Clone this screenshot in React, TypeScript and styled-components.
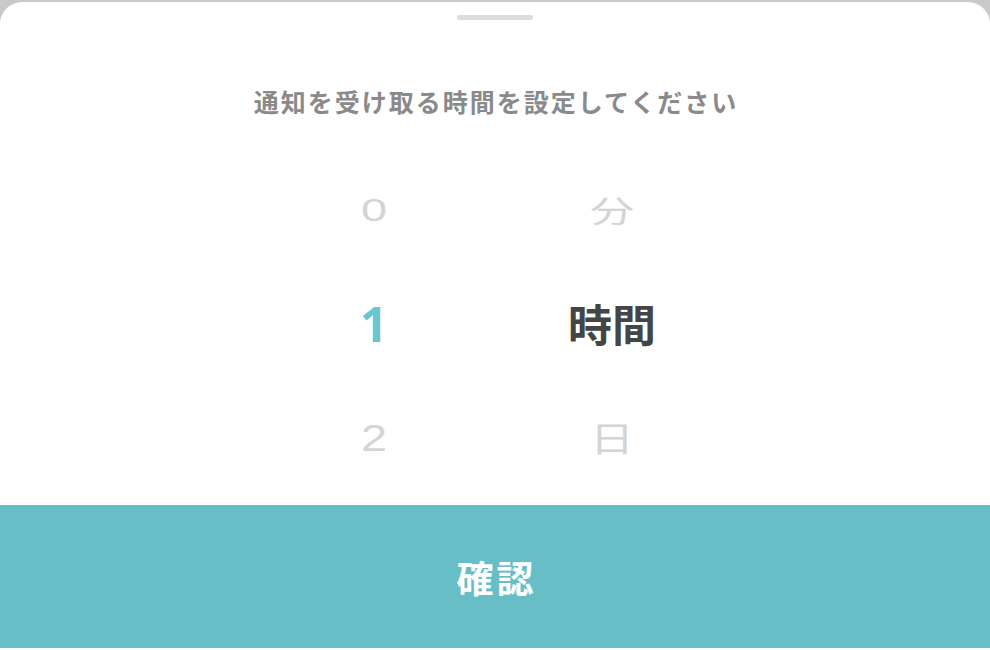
import React from "react";
import styled, { createGlobalStyle } from "styled-components";

const Global = createGlobalStyle`
  html, body { margin: 0; padding: 0; background: #c9c9c9; }
  body { width: 990px; height: 650px; overflow: hidden; }
`;

const Sheet = styled.div`
  margin-top: 2px;
  height: 648px;
  box-sizing: border-box;
  background: #ffffff;
  border-radius: 22px 22px 0 0;
  display: flex;
  flex-direction: column;
  align-items: center;
  padding-bottom: 2px;
`;

const Handle = styled.div`
  margin-top: 13px;
  width: 76px;
  height: 5px;
  border-radius: 3px;
  background: #dcdcdc;
`;

const Title = styled.h1`
  margin: 61px 0 0;
  font-family: "Noto Sans CJK JP", "Noto Sans", sans-serif;
  font-size: 25px;
  line-height: 40px;
  font-weight: 700;
  color: #8a8a8a;
  letter-spacing: 2px;
  text-indent: 2px;
`;

const Picker = styled.div`
  flex: 1;
  align-self: stretch;
  display: grid;
  grid-template-columns: 238px 238px;
  justify-content: center;
  padding-top: 31px;
  padding-right: 4px;
`;

const Column = styled.div`
  display: flex;
  flex-direction: column;
  align-items: center;
`;

const Item = styled.div<{ $state: "top" | "selected" | "bottom"; $kind: "num" | "unit" }>`
  height: 114px;
  display: flex;
  align-items: center;
  justify-content: center;
  font-family: ${(p) =>
    p.$kind === "num"
      ? p.$state === "selected"
        ? `"Open Sans", "Noto Sans", sans-serif`
        : `"Liberation Sans", Arial, sans-serif`
      : `"Noto Sans CJK JP", "Noto Sans", sans-serif`};
  font-size: ${(p) =>
    p.$state === "selected" ? (p.$kind === "num" ? "49px" : "44px") : p.$kind === "num" ? "47px" : "44px"};
  font-weight: ${(p) => (p.$state === "selected" ? 700 : 400)};
  color: ${(p) =>
    p.$state === "selected" ? (p.$kind === "num" ? "#6cc6cf" : "#454545") : "#d4d4d4"};
  transform: ${(p) =>
    p.$state === "top" ? "scaleY(0.68)" : p.$state === "bottom" ? "scaleY(0.8)" : "none"};
`;

const ConfirmButton = styled.button`
  align-self: stretch;
  height: 143px;
  flex-shrink: 0;
  border: none;
  background: #68bec6;
  color: #ffffff;
  font-family: "Noto Sans CJK JP", "Noto Sans", sans-serif;
  font-size: 37px;
  font-weight: 700;
  letter-spacing: 3px;
  text-indent: 3px;
  cursor: pointer;
  padding: 0;
`;

const nums = ["0", "1", "2"];
const units = ["分", "時間", "日"];
const states = ["top", "selected", "bottom"] as const;

export default function App() {
  return (
    <>
      <Global />
      <Sheet>
        <Handle />
        <Title>通知を受け取る時間を設定してください</Title>
        <Picker>
          <Column>
            {nums.map((n, i) => (
              <Item key={n} $state={states[i]} $kind="num">
                {n}
              </Item>
            ))}
          </Column>
          <Column>
            {units.map((u, i) => (
              <Item key={u} $state={states[i]} $kind="unit">
                {u}
              </Item>
            ))}
          </Column>
        </Picker>
        <ConfirmButton>確認</ConfirmButton>
      </Sheet>
    </>
  );
}
